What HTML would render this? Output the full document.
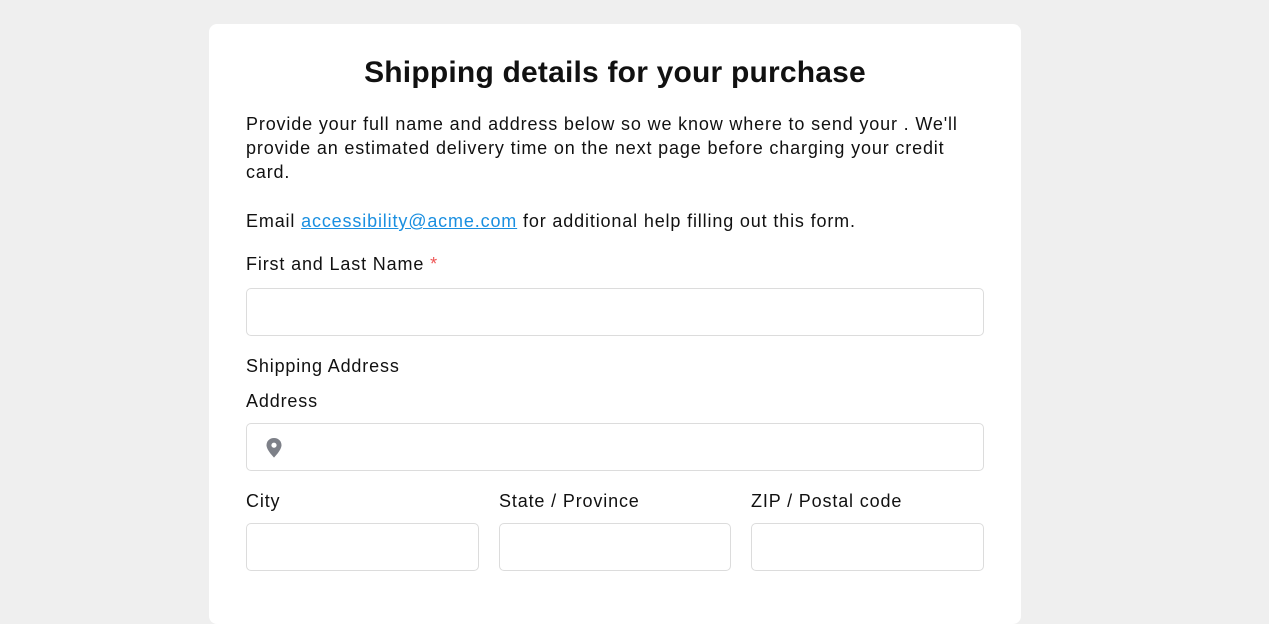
<!DOCTYPE html>
<html><head><style>
body{margin:0;background:#efefef;font-family:"Liberation Sans",sans-serif;color:#111;overflow:hidden;}
.card{position:absolute;left:209px;top:24px;width:812px;height:600px;background:#fff;border-radius:8px;}
.abs{position:absolute;white-space:nowrap;}
h1{position:absolute;left:0;width:812px;margin:0;text-align:center;font-size:30px;font-weight:bold;top:32px;letter-spacing:0.2px;}
.p{font-size:18px;line-height:24px;letter-spacing:0.85px;}
.in{position:absolute;border:1px solid #dcdcdc;border-radius:5px;background:#fff;box-sizing:border-box;height:48px;}
a{color:#1a8fe0;}
</style></head><body>
<div class="card">
<h1>Shipping details for your purchase</h1>
<div class="abs p" style="left:37px;top:88px;">Provide your full name and address below so we know where to send your . We'll<br>provide an estimated delivery time on the next page before charging your credit<br>card.</div>
<div class="abs p" style="left:37px;top:185px;">Email <a href="#">accessibility@acme.com</a> for additional help filling out this form.</div>
<div class="abs p" style="left:37px;top:228px;">First and Last Name <span style="color:#e55">*</span></div>
<div class="in" style="left:37px;top:264px;width:738px;"></div>
<div class="abs p" style="left:37px;top:330px;">Shipping Address</div>
<div class="abs p" style="left:37px;top:365px;">Address</div>
<div class="in" style="left:37px;top:399px;width:738px;">
<svg style="position:absolute;left:17px;top:13px" width="20" height="22" viewBox="0 0 20 22"><path d="M10 1C5.6 1 2.5 4.2 2.5 8.2c0 4.8 7.5 12.3 7.5 12.3s7.5-7.5 7.5-12.3C17.5 4.2 14.4 1 10 1z" fill="#7d8088"/><circle cx="10" cy="8.2" r="2.6" fill="#fff"/></svg>
</div>
<div class="abs p" style="left:37px;top:465px;">City</div>
<div class="abs p" style="left:290px;top:465px;">State / Province</div>
<div class="abs p" style="left:542px;top:465px;">ZIP / Postal code</div>
<div class="in" style="left:37px;top:499px;width:233px;"></div>
<div class="in" style="left:290px;top:499px;width:232px;"></div>
<div class="in" style="left:542px;top:499px;width:233px;"></div>
</div>
</body></html>
